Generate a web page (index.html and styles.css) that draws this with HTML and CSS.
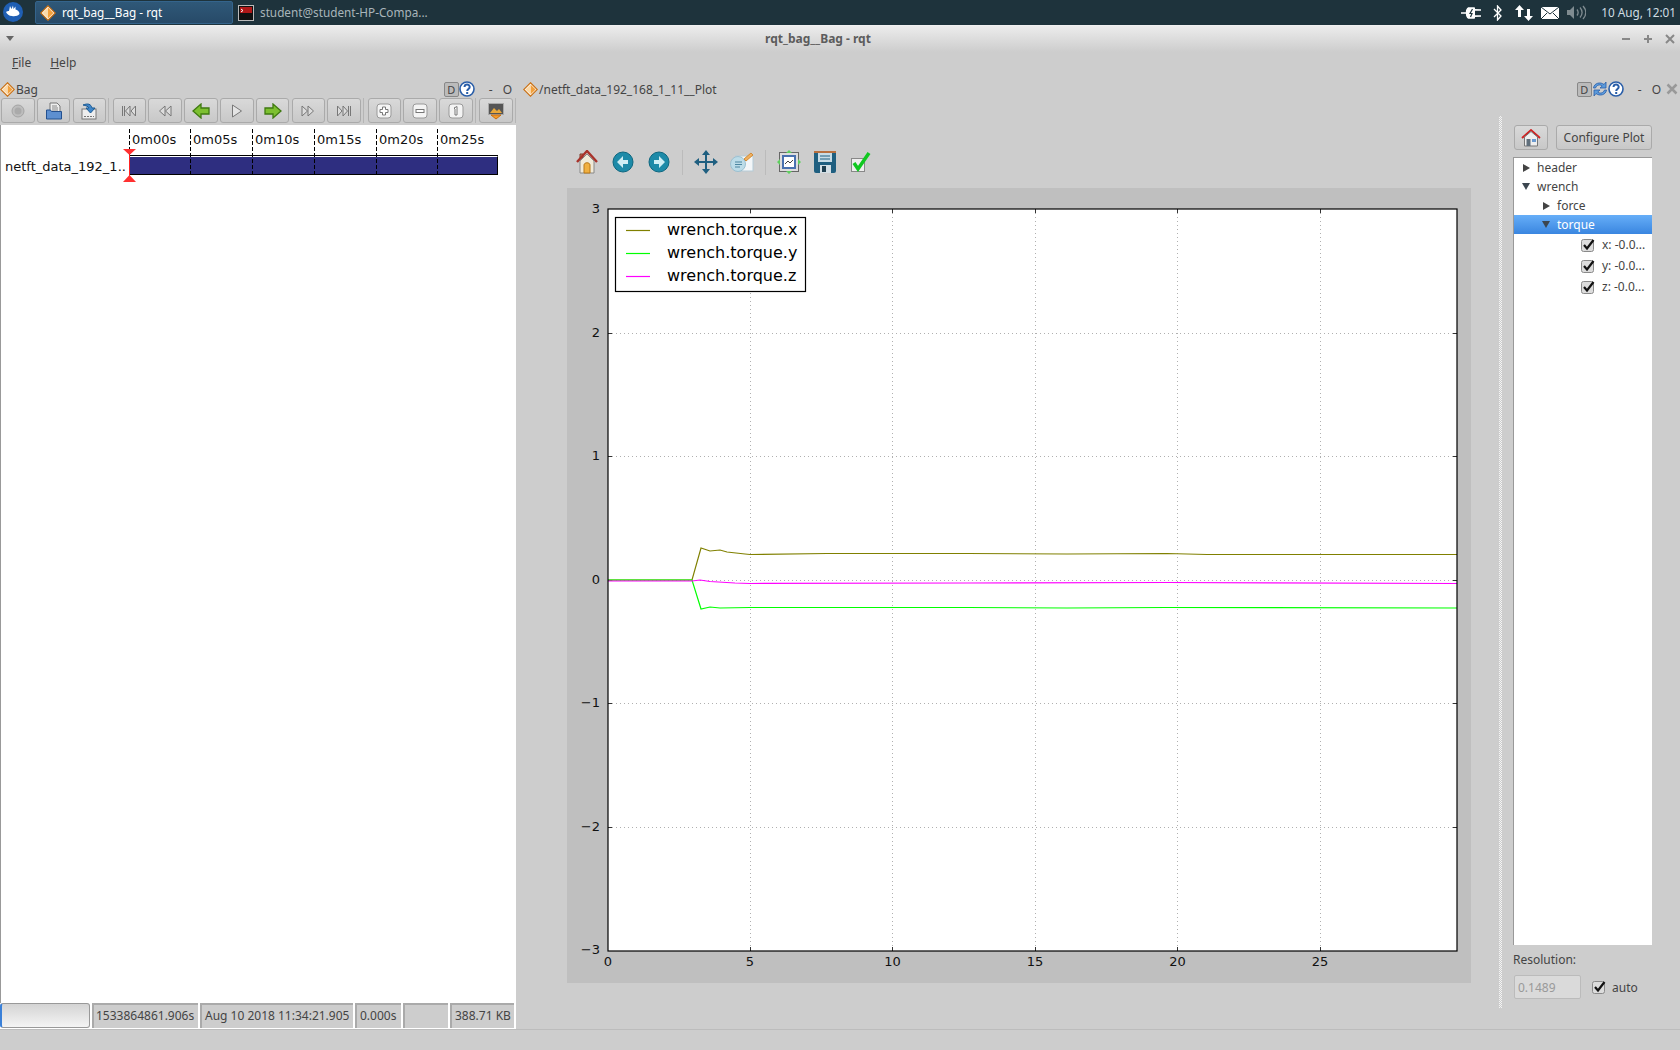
FILE: index.html
```html
<!DOCTYPE html>
<html lang="en">
  <head>
    <meta charset="UTF-8" />
    <title>rqt_bag__Bag - rqt</title>
    <link rel="stylesheet" href="styles.css">
  </head>
  <body>
    <svg class="defs" width="0" height="0">
      <defs>
        <symbol id="diamond" viewBox="0 0 16 16">
          <path d="M8 .8 15.2 8 8 15.2.8 8z" fill="#fff" stroke="#c96f10" stroke-width="1.2"/>
          <path d="M8 2.6 13.4 8 8 13.4z" fill="#f2a03c"/>
          <path d="M8 2.6 2.6 8 8 13.4z" fill="#fbd9a8"/>
        </symbol>
        <symbol id="help" viewBox="0 0 16 16">
          <circle cx="8" cy="8" r="7" fill="#fff" stroke="#2a5ea8" stroke-width="1.6"/>
          <path d="M5.500 6c.2-3.200 5.300-3.200 5.200 0 0 2-2.500 2-2.500 4" fill="none" stroke="#2a5ea8" stroke-width="2"/>
          <rect x="7.200" y="11" width="2" height="2" fill="#2a5ea8"/>
        </symbol>
        <symbol id="check" viewBox="0 0 14 14">
          <rect x=".5" y="1.500" width="12" height="12" rx="2" fill="#dcdcdc" stroke="#8a8a8a"/>
          <path d="M3 7l3 3.500L12.500 2" fill="none" stroke="#111" stroke-width="2.200"/>
        </symbol>
      </defs>
    </svg>

    <header class="taskbar">
      <svg class="logo" viewBox="0 0 20 20" width="20" height="20">
        <circle cx="10" cy="10" r="10" fill="#1f5fb4"/>
        <path d="M3 10c1-1 2-1 3-1l1-5 1.500 3L10 3.500l.5 3.500 2-2.500v3c2 .5 4 2 4 4.500-1.500 2-5 2.500-7.500 2C6 14 4 12 3 10z" fill="#fff"/>
      </svg>
      <div class="task task-active">
        <svg class="task-icon" width="16" height="16"><use href="#diamond"/></svg>
        <span>rqt_bag__Bag - rqt</span>
      </div>
      <div class="task">
        <svg class="task-icon" viewBox="0 0 16 16" width="16" height="16">
          <rect x=".5" y=".5" width="15" height="15" fill="#111" stroke="#bbb"/>
          <rect x="2" y="2" width="12" height="6" fill="#b01818"/>
          <path d="M3 4l2 1.500L3 7" stroke="#fff" fill="none"/>
        </svg>
        <span>student@student-HP-Compa...</span>
      </div>
      <div class="tray">
        <svg class="tray-plug" viewBox="0 0 20 12" width="20" height="12">
          <path d="M0 6h7M7 1h6v2h7M7 11h6V9h7M7 1c-2 2-2 8 0 10" stroke="#fff" fill="#fff" stroke-width="1.500"/>
          <path d="M7 1h7v10H7z" fill="#fff"/>
          <path d="M11.500 2 9 6.500h2L9.500 10" stroke="#1e333c" fill="none" stroke-width="1.200"/>
        </svg>
        <svg class="tray-bt" viewBox="0 0 9 16" width="9" height="16">
          <path d="M1 4l7 7-3.500 4V1L8 5 1 12" stroke="#fff" fill="none" stroke-width="1.300"/>
        </svg>
        <svg class="tray-net" viewBox="0 0 18 16" width="18" height="16">
          <path d="M4.500 0 9 5H6v7H3V5H0zM13.500 16 9 11h3V4h3v7h3z" fill="#fff"/>
        </svg>
        <svg class="tray-mail" viewBox="0 0 18 12" width="18" height="12">
          <rect width="18" height="12" fill="#fff"/>
          <path d="M0 0l9 7 9-7M0 12l6-6M18 12l-6-6" stroke="#1e333c" fill="none"/>
        </svg>
        <svg class="tray-vol" viewBox="0 0 19 15" width="19" height="15">
          <path d="M0 5h3l4-4v13l-4-4H0z" fill="#7f8b90"/>
          <path d="M10 4.500c1.500 2 1.500 4 0 6M13 2.500c2.500 3 2.500 7 0 10M16 1c3.500 4 3.500 9 0 13" stroke="#7f8b90" fill="none" stroke-width="1.300"/>
        </svg>
        <span class="clock">10 Aug, 12:01</span>
      </div>
    </header>

    <div class="titlebar">
      <span class="win-menu"></span>
      <span class="win-title">rqt_bag__Bag - rqt</span>
      <div class="win-buttons">
        <svg viewBox="0 0 10 10" width="10" height="10"><path d="M1 5h8" stroke="#888" stroke-width="2"/></svg>
        <svg viewBox="0 0 10 10" width="10" height="10"><path d="M1 5h8M5 1v8" stroke="#888" stroke-width="2"/></svg>
        <svg viewBox="0 0 10 10" width="10" height="10"><path d="M1 1l8 8M9 1l-8 8" stroke="#888" stroke-width="2"/></svg>
      </div>
    </div>

    <nav class="menubar">
      <span><u>F</u>ile</span>
      <span><u>H</u>elp</span>
    </nav>

    <main class="docks">
      <section class="bag-dock">
        <div class="dock-title">
          <svg width="15" height="15"><use href="#diamond"/></svg>
          <span class="dock-name">Bag</span>
          <span class="dock-d">D</span>
          <svg class="dock-help" width="16" height="16"><use href="#help"/></svg>
          <span class="dock-min">-</span>
          <span class="dock-float">O</span>
        </div>

        <div class="bag-toolbar">
          <button class="tool"><svg viewBox="0 0 16 16" width="16" height="16"><circle cx="8" cy="8" r="6" fill="#bdbdbd" stroke="#a4a4a4"/><circle cx="8" cy="8" r="3.500" fill="#aaa"/></svg></button>
          <button class="tool"><svg viewBox="0 0 18 18" width="18" height="18"><path d="M5 1h7l3 3v6H5z" fill="#eee" stroke="#777"/><path d="M7 4h5M7 6h6M7 8h6" stroke="#888"/><path d="M1.500 8h4l1 1.500h10V17h-15z" fill="#5d8fd0" stroke="#23508f"/></svg></button>
          <button class="tool"><svg viewBox="0 0 18 18" width="18" height="18"><rect x="2" y="7" width="14" height="10" fill="#eee" stroke="#777"/><path d="M4 14.500h10" stroke="#777" stroke-dasharray="2 1"/><path d="M3 3c5-2 8-1 9 3h3l-4.500 5L6 6h3C8.500 4.500 6 3.500 3 3z" fill="#3f86c9" stroke="#1c5a94"/></svg></button>
          <span class="tool-sep"></span>
          <button class="tool"><svg viewBox="0 0 16 12" width="16" height="12"><path d="M1.500 1v10M3.500 1v10M9 1 4.500 6 9 11zM14.500 1 10 6l4.500 5z" fill="#ddd" stroke="#777"/></svg></button>
          <button class="tool"><svg viewBox="0 0 16 12" width="16" height="12"><path d="M8 1 2.500 6 8 11zM14 1 8.500 6l5.500 5z" fill="#ddd" stroke="#777"/></svg></button>
          <button class="tool"><svg viewBox="0 0 18 16" width="18" height="16"><path d="M1 8l8-7v4h8v6H9v4z" fill="#7dc030" stroke="#3f7a10" stroke-width="1.300"/></svg></button>
          <button class="tool"><svg viewBox="0 0 12 14" width="12" height="14"><path d="M1.500 1 10.500 7l-9 6z" fill="#e4e4e4" stroke="#777"/></svg></button>
          <button class="tool"><svg viewBox="0 0 18 16" width="18" height="16"><path d="M17 8 9 1v4H1v6h8v4z" fill="#7dc030" stroke="#3f7a10" stroke-width="1.300"/></svg></button>
          <button class="tool"><svg viewBox="0 0 16 12" width="16" height="12"><path d="M8 1l5.500 5L8 11zM2 1l5.500 5L2 11z" fill="#ddd" stroke="#777"/></svg></button>
          <button class="tool"><svg viewBox="0 0 16 12" width="16" height="12"><path d="M14.500 1v10M12.500 1v10M7 1l4.500 5L7 11zM1.500 1 6 6l-4.500 5z" fill="#ddd" stroke="#777"/></svg></button>
          <span class="tool-sep"></span>
          <button class="tool"><svg viewBox="0 0 16 16" width="16" height="16"><rect x="1" y="1" width="14" height="14" rx="3" fill="#f4f4f4" stroke="#999"/><path d="M6.500 4h3v2.500H12v3H9.500V12h-3V9.500H4v-3h2.500z" fill="#fff" stroke="#777"/></svg></button>
          <button class="tool"><svg viewBox="0 0 16 16" width="16" height="16"><rect x="1" y="1" width="14" height="14" rx="3" fill="#f4f4f4" stroke="#999"/><rect x="4" y="6.500" width="8" height="3" fill="#fff" stroke="#777"/></svg></button>
          <button class="tool"><svg viewBox="0 0 16 16" width="16" height="16"><rect x="1" y="1" width="14" height="14" rx="3" fill="#f4f4f4" stroke="#999"/><path d="M6 5l3-1.500V12H7V6z" fill="#fff" stroke="#777"/></svg></button>
          <span class="tool-sep"></span>
          <button class="tool"><svg viewBox="0 0 18 18" width="18" height="18"><rect x="1.500" y="1.500" width="15" height="11" fill="#555" stroke="#aaa"/><path d="M3 11l4-5 3 3 2-2 3 4z" fill="#e9a83a"/><path d="M4 13h10l-5 4z" fill="#f49a2a" stroke="#c96f10"/></svg></button>
          <span class="tool-sep"></span>
        </div>

        <div class="timeline">
          <svg class="timeline-svg" width="515" height="60" viewBox="0 0 515 60">
            <g class="tl-text">
              <text x="132" y="19">0m00s</text>
              <text x="193" y="19">0m05s</text>
              <text x="255" y="19">0m10s</text>
              <text x="317" y="19">0m15s</text>
              <text x="379" y="19">0m20s</text>
              <text x="440" y="19">0m25s</text>
              <text x="5" y="46">netft_data_192_1..</text>
            </g>
            <rect x="129.500" y="30.500" width="368" height="19" fill="#2e2e80" stroke="#000"/>
            <path d="M129.500 31.500h368" stroke="#fff"/>
            <g class="tl-ticks">
              <path d="M129.500 4v45M190.500 4v45M252.500 4v45M314.500 4v45M376.500 4v45M437.500 4v45"/>
            </g>
            <path d="M129.500 30v27" stroke="#f22"/>
            <path d="M123 24h13l-6.500 6zM123 57h13l-6.500-7z" fill="#ff3030"/>
          </svg>
        </div>

        <div class="statusbar">
          <div class="progress"></div>
          <div class="cell cell-stamp">1533864861.906s</div>
          <div class="cell cell-date">Aug 10 2018 11:34:21.905</div>
          <div class="cell cell-dur">0.000s</div>
          <div class="cell cell-empty"></div>
          <div class="cell cell-size">388.71 KB</div>
        </div>
      </section>

      <section class="plot-dock">
        <div class="dock-title">
          <svg width="15" height="15"><use href="#diamond"/></svg>
          <span class="dock-name">/netft_data_192_168_1_11__Plot</span>
          <span class="dock-d">D</span>
          <svg class="dock-refresh" viewBox="0 0 16 16" width="16" height="16">
            <path d="M1.500 7c.5-5 7-6.500 10.500-3.500L14 1v6H8l2.200-2C8 3 4.500 4 3.500 7zM14.500 9c-.5 5-7 6.500-10.500 3.500L2 15V9h6l-2.200 2c2.200 2 5.700 1 6.700-2z" fill="#5c9bdc" stroke="#2a5ea8" stroke-width=".8"/>
          </svg>
          <svg class="dock-help-plot" width="16" height="16"><use href="#help"/></svg>
          <span class="dock-min">-</span>
          <span class="dock-float">O</span>
          <svg class="dock-close" viewBox="0 0 12 12" width="12" height="12"><path d="M1.500 1.500l9 9M10.500 1.500l-9 9" stroke="#999" stroke-width="2.500"/></svg>
        </div>

        <div class="plot-body">
          <div class="figure-col">
            <div class="mpl-toolbar">
              <span class="mpl-btn"><svg viewBox="0 0 22 24" width="22" height="24"><path d="M4 4h3v4H4z" fill="#c9785a" stroke="#7a3a2a"/><path d="M1 12 11 1l10 11" fill="none" stroke="#a8322a" stroke-width="2.400"/><path d="M4 11l7-7 7 7v12H4z" fill="#f0ead8" stroke="#888"/><path d="M8 23v-8c0-3 6-3 6 0v8z" fill="#f0b040" stroke="#b87818"/></svg></span>
              <span class="mpl-btn"><svg viewBox="0 0 22 22" width="22" height="22"><circle cx="11" cy="11" r="10" fill="#1d8aa8" stroke="#0e6780"/><path d="M16 9v4h-5v4l-6-6 6-6v4z" fill="#cfeef5"/></svg></span>
              <span class="mpl-btn"><svg viewBox="0 0 22 22" width="22" height="22"><circle cx="11" cy="11" r="10" fill="#1d8aa8" stroke="#0e6780"/><path d="M6 9v4h5v4l6-6-6-6v4z" fill="#cfeef5"/></svg></span>
              <span class="mpl-sep"></span>
              <span class="mpl-btn"><svg viewBox="0 0 24 24" width="24" height="24"><path d="M12 0l4 5h-3v6h6V8l5 4-5 4v-3h-6v6h3l-4 5-4-5h3v-6H5v3l-5-4 5-4v3h6V5H8z" fill="#1f5f80"/></svg></span>
              <span class="mpl-btn"><svg viewBox="0 0 24 22" width="24" height="22"><rect x="6" y="5" width="17" height="15" fill="#f3f6f8" stroke="#b5ccd8"/><circle cx="8" cy="13" r="7.500" fill="#bcdce8" stroke="#9cc0d0"/><path d="M5 11h7M5 13.500h7M5 16h5" stroke="#4c86a0"/><path d="M14 8l7-6 2 2-7 6z" fill="#f0b060" stroke="#d08c38"/></svg></span>
              <span class="mpl-sep"></span>
              <span class="mpl-btn"><svg viewBox="0 0 24 24" width="24" height="24"><rect x="2.500" y="2.500" width="19" height="19" fill="#ddd" stroke="#666"/><rect x="5" y="5" width="14" height="14" fill="#4a72b0"/><rect x="7" y="7" width="10" height="10" fill="#fff"/><path d="M8 14l3-3 2 2 3-3" stroke="#444" fill="none"/><path d="M12 0l3 3H9zM12 24l3-3H9zM0 12l3-3v6zM24 12l-3-3v6z" fill="#5fd05f"/></svg></span>
              <span class="mpl-btn"><svg viewBox="0 0 24 24" width="24" height="24"><path d="M1 3a2 2 0 0 1 2-2h18a2 2 0 0 1 2 2v18a2 2 0 0 1-2 2H3a2 2 0 0 1-2-2z" fill="#1f5f80"/><rect x="1" y="1" width="22" height="2" fill="#b87040"/><rect x="5" y="3" width="14" height="9" fill="#c8dce6"/><path d="M7 6h10M7 9h10" stroke="#1f5f80"/><rect x="7" y="15" width="11" height="8" fill="#d4dfe5"/><rect x="9" y="16" width="4" height="6" fill="#1f3f50"/></svg></span>
              <span class="mpl-btn"><svg viewBox="0 0 22 22" width="22" height="22"><rect x="1.500" y="7.500" width="13" height="13" fill="#eee" stroke="#888"/><path d="M4 12l4 6L19 2" fill="none" stroke="#10c820" stroke-width="3.500"/></svg></span>
            </div>

            <svg class="figure" width="904" height="795" viewBox="0 0 904 795">
              <rect class="axes-bg" x="41" y="21" width="849" height="742"/>
              <g class="grid">
                <path d="M183.500 21v742M325.500 21v742M468.500 21v742M610.500 21v742M753.500 21v742"/>
                <path d="M41 145.500h849M41 268.500h849M41 392.500h849M41 515.500h849M41 639.500h849"/>
              </g>
              <g class="ticks">
                <path d="M183.500 21v4M325.500 21v4M468.500 21v4M610.500 21v4M753.500 21v4M183.500 763v-4M325.500 763v-4M468.500 763v-4M610.500 763v-4M753.500 763v-4"/>
                <path d="M41 145.500h4M41 268.500h4M41 392.500h4M41 515.500h4M41 639.500h4M890 145.500h-4M890 268.500h-4M890 392.500h-4M890 515.500h-4M890 639.500h-4"/>
              </g>
              <polyline class="series-x" points="41,392 125,392 134,360 143,363 153,362 160,364 178,366 183,366.500 260,365.500 400,365.500 500,366 600,365.500 640,366.500 890,366.500"/>
              <polyline class="series-y" points="41,392 125,392 134,421 143,419 153,420 183,419.500 400,419.500 500,420 600,419.500 890,420"/>
              <polyline class="series-z" points="41,393 125,393 133,392 143,393.500 168,395 183,395.500 400,395 600,394.500 890,395.500"/>
              <rect class="axes-frame" x="41" y="21" width="849" height="742"/>
              <g class="tick-labels">
                <text x="33" y="25" text-anchor="end">3</text>
                <text x="33" y="149" text-anchor="end">2</text>
                <text x="33" y="272" text-anchor="end">1</text>
                <text x="33" y="396" text-anchor="end">0</text>
                <text x="33" y="519" text-anchor="end">−1</text>
                <text x="33" y="643" text-anchor="end">−2</text>
                <text x="33" y="766" text-anchor="end">−3</text>
                <text x="41" y="778" text-anchor="middle">0</text>
                <text x="183" y="778" text-anchor="middle">5</text>
                <text x="325.500" y="778" text-anchor="middle">10</text>
                <text x="468" y="778" text-anchor="middle">15</text>
                <text x="610.500" y="778" text-anchor="middle">20</text>
                <text x="753" y="778" text-anchor="middle">25</text>
              </g>
              <rect class="legend-box" x="48.500" y="29.500" width="190" height="74"/>
              <path class="series-x" d="M59 42.500h24"/>
              <path class="series-y" d="M59 65.500h24"/>
              <path class="series-z" d="M59 88.500h24"/>
              <g class="legend-text">
                <text x="100" y="47">wrench.torque.x</text>
                <text x="100" y="70">wrench.torque.y</text>
                <text x="100" y="93">wrench.torque.z</text>
              </g>
            </svg>
          </div>

          <div class="splitter"></div>

          <aside class="config">
            <div class="config-top">
              <button class="btn btn-home">
                <svg viewBox="0 0 20 18" width="20" height="18"><path d="M1 9l9-8 9 8" fill="none" stroke="#d02020" stroke-width="1.800"/><path d="M3.500 8 10 2.500 16.500 8v9h-13z" fill="#eee" stroke="#777"/><rect x="5.500" y="10" width="4" height="7" fill="#606f7c"/><rect x="11" y="10" width="4" height="3" fill="#6a9ad0"/></svg>
              </button>
              <button class="btn btn-config">Configure Plot</button>
            </div>
            <div class="tree">
              <div class="row row-0"><span class="tri tri-right"></span>header</div>
              <div class="row row-0"><span class="tri tri-down"></span>wrench</div>
              <div class="row row-1"><span class="tri tri-right"></span>force</div>
              <div class="row row-1 row-selected"><span class="tri tri-down"></span>torque</div>
              <div class="row row-leaf"><svg width="14" height="14"><use href="#check"/></svg>x: -0.0...</div>
              <div class="row row-leaf"><svg width="14" height="14"><use href="#check"/></svg>y: -0.0...</div>
              <div class="row row-leaf"><svg width="14" height="14"><use href="#check"/></svg>z: -0.0...</div>
            </div>
            <div class="res-label">Resolution:</div>
            <div class="res-row">
              <input class="res-input" value="0.1489" disabled>
              <svg width="14" height="14"><use href="#check"/></svg>
              <span>auto</span>
            </div>
          </aside>
        </div>
      </section>
    </main>

    <div class="win-bottom"></div>
  </body>
</html>
```

FILE: styles.css
```css
html,
body {
  height: 100%;
}

body {
  margin: 0;
  width: 1680px;
  height: 1050px;
  overflow: hidden;
  display: flex;
  flex-direction: column;
  background-color: #cdcdcd;
  color: #444;
  font-family: "Noto Sans", sans-serif;
  font-size: 12px;
}

svg {
  display: block;
  flex-shrink: 0;
}

.defs {
  position: absolute;
}

/* panel along the top of the desktop */
.taskbar {
  height: 25px;
  flex-shrink: 0;
  display: flex;
  align-items: center;
  background-color: #1e333c;
  border-bottom: 1px solid #f0f0f0;
  padding-left: 3px;
  color: #fff;
  font-size: 11.750px;
}

.taskbar span {
  padding-bottom: 2px;
}

.logo {
  margin: 0 12px 1px 0;
}

.task {
  display: flex;
  align-items: center;
  height: 23px;
  box-sizing: border-box;
  color: #a9b5ba;
}

.task-active {
  width: 198px;
  background: linear-gradient(#2f5878, #274a68);
  border: 1px solid #34648c;
  border-radius: 2px;
  margin-right: 5px;
  padding-left: 4px;
  color: #fff;
}

.task-icon {
  margin-right: 6px;
}

.tray {
  margin-left: auto;
  display: flex;
  align-items: center;
  padding-right: 4px;
}

.tray-bt {
  margin-left: 12px;
}

.tray-net {
  margin-left: 13px;
}

.tray-mail,
.tray-vol {
  margin-left: 8px;
}

.clock {
  margin-left: 15px;
  color: #cfdde3;
}

.titlebar {
  height: 26px;
  flex-shrink: 0;
  box-sizing: border-box;
  display: flex;
  align-items: center;
  justify-content: center;
  position: relative;
  padding: 0 44px 2px 0;
  background: linear-gradient(#ececec, #cdcdcd);
}

.win-title {
  color: #5c5c5c;
  font-weight: 700;
}

.win-menu {
  position: absolute;
  left: 6px;
  top: 10px;
  border-left: 4px solid transparent;
  border-right: 4px solid transparent;
  border-top: 5px solid #666;
}

.win-buttons {
  position: absolute;
  right: 5px;
  top: 8px;
  display: flex;
  gap: 12px;
}

.menubar {
  height: 24px;
  flex-shrink: 0;
  display: flex;
  gap: 19px;
  align-items: center;
  padding-left: 12px;
  margin-top: -2px;
}

.docks {
  flex: 1;
  display: flex;
  gap: 4px;
  padding-top: 6px;
  min-height: 0;
}

.dock-title {
  height: 18px;
  display: flex;
  align-items: center;
  flex-shrink: 0;
}

.dock-name {
  margin-left: 1px;
  flex: 1;
}

.dock-d {
  width: 13px;
  height: 13px;
  border: 1px solid #888;
  border-radius: 2px;
  background-color: #bbb;
  text-align: center;
  line-height: 13px;
  font-size: 11px;
}

.dock-min {
  margin-left: 14px;
}

.dock-float {
  margin-left: 10px;
}

/* left dock */
.bag-dock {
  width: 516px;
  display: flex;
  flex-direction: column;
}

.bag-dock .dock-title {
  padding-right: 1px;
}

.bag-dock .dock-float {
  margin-right: 3px;
}

.bag-toolbar {
  height: 27px;
  flex-shrink: 0;
  display: flex;
  align-items: flex-start;
  gap: 2.300px;
  padding-left: 1px;
  overflow: hidden;
}

.tool {
  flex: none;
  width: 33.500px;
  height: 25px;
  padding: 0;
  display: flex;
  align-items: center;
  justify-content: center;
  background: linear-gradient(#d9d9d9, #c8c8c8);
  border: 1px solid #aaa;
  border-radius: 3px;
}

.tool-sep {
  flex: none;
  width: 2px;
  height: 25px;
  box-sizing: border-box;
  border-left: 1px solid #b5b5b5;
}

.timeline {
  flex: 1;
  background-color: #fff;
  border-left: 1px solid #999;
  min-height: 0;
}

.timeline-svg {
  margin-left: -1px;
}

.tl-text {
  font-family: "DejaVu Sans", sans-serif;
  font-size: 13px;
  fill: #111;
}

.tl-ticks {
  stroke: #000;
  stroke-dasharray: 4 2;
  fill: none;
}

.statusbar {
  height: 26px;
  flex-shrink: 0;
  display: flex;
  gap: 2px;
  background-color: #fff;
  box-sizing: border-box;
  padding-bottom: 1px;
}

.progress {
  width: 90px;
  box-sizing: border-box;
  border: 1px solid #999;
  border-left: 2px solid #3a80d8;
  border-radius: 3px;
  background: linear-gradient(#d4d4d4, #f4f4f4);
}

.cell {
  box-sizing: border-box;
  background-color: #cdcdcd;
  border-top: 2px solid #aaa;
  border-left: 2px solid #aaa;
  padding-left: 3px;
  line-height: 22px;
  white-space: nowrap;
  overflow: hidden;
}

.cell-stamp {
  width: 106px;
  padding-left: 2px;
}

.cell-date {
  width: 153px;
}

.cell-dur {
  width: 46px;
}

.cell-empty {
  width: 45px;
}

.cell-size {
  width: 64px;
}

/* right dock */
.plot-dock {
  flex: 1;
  display: flex;
  flex-direction: column;
  min-width: 0;
}

.plot-dock .dock-title {
  padding-left: 3px;
}

.dock-close {
  margin-left: 5px;
  margin-right: 2px;
}

.plot-body {
  display: flex;
  padding-left: 47px;
}

.figure-col {
  width: 904px;
  padding-top: 38px;
}

.mpl-toolbar {
  height: 52px;
  box-sizing: border-box;
  display: flex;
  align-items: center;
  padding-left: 2px;
}

.mpl-btn {
  width: 36px;
  display: flex;
  justify-content: center;
}

.mpl-sep {
  width: 1px;
  height: 25px;
  margin: 0 5px;
  background-color: #bbb;
}

.figure {
  background-color: #bfbfbf;
}

.axes-bg {
  fill: #fff;
}

.axes-frame {
  fill: none;
  stroke: #000;
  stroke-width: 1.200;
}

.grid {
  stroke: #b0b0b0;
  stroke-dasharray: 1 3;
  fill: none;
}

.ticks {
  stroke: #333;
  fill: none;
}

.series-x,
.series-y,
.series-z {
  fill: none;
  stroke-width: 1.200;
}

.series-x {
  stroke: #808000;
}

.series-y {
  stroke: #00ff00;
}

.series-z {
  stroke: #ff00ff;
}

.tick-labels {
  font-family: "DejaVu Sans", sans-serif;
  font-size: 13px;
  fill: #111;
}

.legend-box {
  fill: #fff;
  stroke: #000;
  stroke-width: 1.200;
}

.legend-text {
  font-family: "DejaVu Sans", sans-serif;
  font-size: 16px;
  fill: #000;
}

.splitter {
  width: 3px;
  height: 892px;
  margin: 18px 11px 0 28px;
  background: repeating-conic-gradient(#f4f4f4 0 25%, transparent 0 50%) 0 0 / 2px 2px;
}

.config {
  width: 141px;
  padding-top: 27px;
}

.config-top {
  display: flex;
  gap: 8px;
  margin-left: 1px;
}

.btn {
  height: 25px;
  padding: 0;
  background: linear-gradient(#d9d9d9, #c8c8c8);
  border: 1px solid #aaa;
  border-radius: 3px;
  color: #444;
  font-family: inherit;
  font-size: 12px;
}

.btn-home {
  width: 34px;
  display: flex;
  align-items: center;
  justify-content: center;
}

.btn-config {
  width: 96px;
}

.tree {
  width: 139px;
  height: 788px;
  margin-top: 7px;
  background-color: #fff;
  border-top: 1px solid #999;
  border-left: 1px solid #999;
  box-sizing: border-box;
}

.row {
  height: 19px;
  display: flex;
  align-items: center;
}

.row-0 {
  padding-left: 8px;
}

.row-1 {
  padding-left: 28px;
}

.row-selected {
  background: linear-gradient(#66aef8, #3a86e0);
  color: #fff;
}

.row-leaf {
  height: 21px;
  padding-left: 67px;
  gap: 7px;
}

.tri {
  width: 0;
  height: 0;
  margin-right: 7px;
  border-style: solid;
  border-color: transparent;
}

.tri-right {
  border-width: 4.500px 0 4.500px 7px;
  border-left-color: #444;
  margin-left: 1px;
}

.tri-down {
  border-width: 7px 4.500px 0;
  border-top-color: #3c4650;
}

.res-label {
  margin-top: 6px;
  height: 17px;
}

.res-row {
  display: flex;
  align-items: center;
  gap: 6px;
  margin-top: 7px;
  margin-left: 1px;
}

.res-input {
  width: 67px;
  height: 24px;
  box-sizing: border-box;
  padding: 0 3px;
  margin-right: 5px;
  background-color: #dadada;
  border: 1px solid #bbb;
  border-radius: 2px;
  color: #999;
  font-family: inherit;
  font-size: 12px;
}

.win-bottom {
  height: 21px;
  flex-shrink: 0;
  box-sizing: border-box;
  border-top: 1px solid #bcbcbc;
}
```
